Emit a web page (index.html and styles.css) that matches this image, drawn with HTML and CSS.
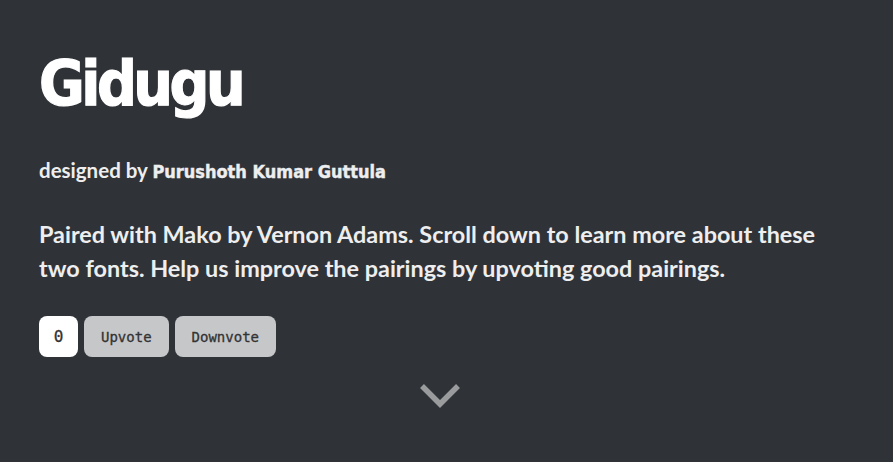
FILE: index.html
```html
<!DOCTYPE html>
<html>
<head>
<meta charset="utf-8">
<link rel="stylesheet" href="styles.css">
</head>
<body>
<main class="hero">
  <h1 class="title">Gidugu</h1>
  <p class="byline">designed by <span class="author">Purushoth Kumar Guttula</span></p>
  <p class="desc">Paired with Mako by Vernon Adams. Scroll down to learn more about these two fonts. Help us improve the pairings by upvoting good pairings.</p>
  <div class="votes">
    <span class="count">0</span>
    <button class="btn">Upvote</button>
    <button class="btn">Downvote</button>
  </div>
  <div class="more">
    <svg width="42" height="26" viewBox="0 0 42 26"><path d="M3 3 L21 21 L39 3" fill="none" stroke="#9a9b9c" stroke-width="5.5"/></svg>
  </div>
</main>
</body>
</html>
```
FILE: styles.css
```css
html, body {
  margin: 0;
  padding: 0;
  background: #2f3338;
  height: 100%;
}
.hero {
  padding: 40px 53px 0 39px;
  color: #eeeeef;
  font-family: "Lato", "Noto Sans", sans-serif;
}
.title {
  margin: 0;
  font-family: "DejaVu Sans Condensed", "DejaVu Sans", sans-serif;
  font-stretch: condensed;
  font-weight: 700;
  font-size: 62px;
  line-height: 88px;
  color: #ffffff;
  letter-spacing: -3.5px;
  -webkit-text-stroke: 1.2px #ffffff;
}
.byline {
  margin: 30px 0 0;
  font-size: 20.5px;
  font-weight: 700;
  line-height: 24px;
}
.author {
  font-family: "DejaVu Sans Condensed", "DejaVu Sans", sans-serif;
  font-stretch: condensed;
  font-size: 18px;
  -webkit-text-stroke: 0.4px #eeeeef;
}
.desc {
  margin: 33px 0 0;
  font-size: 23.4px;
  font-weight: 700;
  line-height: 34px;
  max-width: 801px;
}
.votes {
  display: flex;
  gap: 6px;
  margin-top: 31px;
}
.count, .btn {
  height: 41px;
  border-radius: 8px;
  font-family: "DejaVu Sans Mono", monospace;
  font-size: 14px;
  display: flex;
  align-items: center;
  justify-content: center;
  border: none;
  box-sizing: border-box;
  -webkit-text-stroke: 0.3px #333;
}
.count {
  width: 39px;
  background: #ffffff;
  color: #333;
  font-size: 16px;
}
.btn {
  background: #c6c7c9;
  color: #333;
  padding: 0 17px;
}
.more {
  display: flex;
  justify-content: center;
  margin-top: 26px;
}
```
